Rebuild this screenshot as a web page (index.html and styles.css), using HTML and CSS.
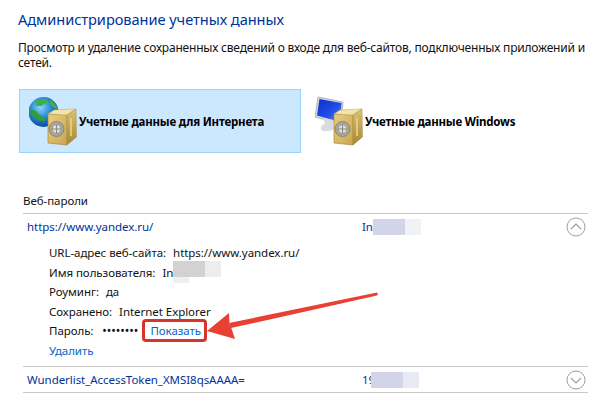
FILE: index.html
```html
<!DOCTYPE html>
<html lang="ru">
<head>
<meta charset="utf-8">
<title>Администрирование учетных данных</title>
<link rel="stylesheet" href="styles.css">
</head>
<body>
<svg width="0" height="0" class="defs">
  <defs>
    <radialGradient id="globe" cx="40%" cy="35%" r="70%">
      <stop offset="0" stop-color="#8ad6f7"/><stop offset=".55" stop-color="#1f7fd0"/><stop offset="1" stop-color="#0f3f95"/>
    </radialGradient>
    <linearGradient id="safeFront" x1="0" y1="0" x2="1" y2="1">
      <stop offset="0" stop-color="#e6cf80"/><stop offset="1" stop-color="#c9a650"/>
    </linearGradient>
    <linearGradient id="safeSide" x1="0" y1="0" x2="0" y2="1">
      <stop offset="0" stop-color="#dcc272"/><stop offset="1" stop-color="#a98636"/>
    </linearGradient>
    <linearGradient id="screen" x1="0" y1="0" x2="1" y2="1">
      <stop offset="0" stop-color="#0a2fc8"/><stop offset=".6" stop-color="#2250e8"/><stop offset="1" stop-color="#7f9cf0"/>
    </linearGradient>
    <g id="safe">
      <path d="M1 5 L20 6 L20 36 L1 34Z" fill="url(#safeFront)" stroke="#a88a3e" stroke-width=".7"/>
      <path d="M1 5 L7 1 L29 0 L20 6Z" fill="#f3e4a8" stroke="#c2a452" stroke-width=".5"/>
      <path d="M20 6 L29 0 L29.500 28 L20 36Z" fill="url(#safeSide)" stroke="#a88a3e" stroke-width=".5"/>
      <path d="M24 9 V27" stroke="#ecd78f" stroke-width="1.500"/>
      <circle cx="9.500" cy="20" r="7.500" fill="#a9a69c" stroke="#7d7a70" stroke-width=".8"/>
      <circle cx="9.500" cy="20" r="4.500" fill="#dedcd4" stroke="#8c8a82" stroke-width=".8"/>
      <path d="M9.500 15.500 V24.500 M5 20 H14" stroke="#8c8a82" stroke-width="1"/>
    </g>
  </defs>
</svg>
<main class="page">
  <h1 class="title">Администрирование учетных данных</h1>
  <p class="lead">Просмотр и удаление сохраненных сведений о входе для веб-сайтов, подключенных приложений и сетей.</p>
  <div class="tabs">
    <div class="tab tab-active">
      <svg class="tab-icon" width="50" height="50" viewBox="0 0 50 50" aria-hidden="true">
        <circle cx="14.500" cy="16" r="15" fill="url(#globe)"/>
        <path d="M7 5 C11 2.500 16 2.500 20 4 C19 7 15 7 13 9.500 C11 11 10 9 7 10Z" fill="#3cae4a"/>
        <path d="M0.500 14 C4 12.500 7 15 9.500 18 C12 20.500 16 20.500 17 24 C14 26.500 10 25 7 23 C4 21 1 18.500 0.500 14Z" fill="#2f9c3f"/>
        <path d="M21 4 C25 6 28 10 29 14 C26 13 23 10 21 8Z" fill="#41b04e"/>
        <use href="#safe" x="18" y="13"/>
      </svg>
      <span class="tab-label">Учетные данные для Интернета</span>
    </div>
    <div class="tab tab-plain">
      <svg class="tab-icon" width="50" height="50" viewBox="0 0 50 50" aria-hidden="true">
        <path d="M3 1 L28 6 L26 28 L0 21Z" fill="#d3d6dc" stroke="#9aa0a8" stroke-width=".7"/>
        <path d="M4.500 3 L26.500 7 L25 26 L2 19.500Z" fill="url(#screen)"/>
        <path d="M8 22 L18 24 L19 30 C23 33 14 36 8 35 C4 33 6 29 10 28Z" fill="#d8dbdf"/>
        <use href="#safe" x="18" y="13"/>
      </svg>
      <span class="tab-label">Учетные данные Windows</span>
    </div>
  </div>
  <h2 class="section">Веб-пароли</h2>
  <section class="list">
    <div class="row">
      <a class="row-name">https://www.yandex.ru/</a>
      <span class="row-user">In<span class="mask mask-blue"></span><span class="mask mask-pale"></span></span>
      <svg class="chev" width="20" height="20" viewBox="0 0 20 20" aria-hidden="true"><circle cx="10" cy="10" r="9" fill="none" stroke="#a0a0a0" stroke-width="1"/><path d="M5 12 L10 7 L15 12" fill="none" stroke="#a0a0a0" stroke-width="1.200"/></svg>
    </div>
    <div class="details">
      <div class="line"><span class="key">URL-адрес веб-сайта:</span><span>https://www.yandex.ru/</span></div>
      <div class="line"><span class="key">Имя пользователя:</span><span class="row-plain">In<span class="mask mask-gray-tall"></span><span class="mask mask-gray"></span><span class="mask mask-lite"></span></span></div>
      <div class="line"><span class="key">Роуминг:</span><span>да</span></div>
      <div class="line"><span class="key">Сохранено:</span><span>Internet Explorer</span></div>
      <div class="line"><span class="key">Пароль:</span><span class="dots">••••••••</span><a class="show">Показать</a></div>
      <div class="line"><a class="link">Удалить</a></div>
    </div>
    <div class="row row-last">
      <a class="row-name">Wunderlist_AccessToken_XMSI8qsAAAA=</a>
      <span class="row-user">19<span class="mask mask-blue mask-tight"></span><span class="mask mask-pale2"></span></span>
      <svg class="chev" width="20" height="20" viewBox="0 0 20 20" aria-hidden="true"><circle cx="10" cy="10" r="9" fill="none" stroke="#a0a0a0" stroke-width="1"/><path d="M5 8 L10 13 L15 8" fill="none" stroke="#a0a0a0" stroke-width="1.200"/></svg>
    </div>
  </section>
  <svg class="arrow" width="190" height="60" viewBox="0 0 190 60" aria-hidden="true">
    <path d="M175 2.500 Q176.500 4 175 5.500 L29 38 L27 33Z" fill="#e84033"/>
    <path d="M5 41 L27 23 L27.500 34 L29 37 L33 49Z" fill="#e84033"/>
  </svg>
</main>
</body>
</html>
```
FILE: styles.css
```css
* { box-sizing: border-box; }
html, body { margin: 0; padding: 0; }
body {
  width: 607px;
  height: 415px;
  overflow: hidden;
  background: #fff;
  font-family: "Noto Sans", "Open Sans", sans-serif;
  color: #111;
  font-size: 11.5px;
  letter-spacing: -.05px;
}
.defs { position: absolute; }
.page { position: relative; padding: 9px 0 0 18px; height: 415px; }
.title {
  margin: 0;
  font-size: 14.600px;
  font-weight: 400;
  line-height: 20px;
  color: #003399;
}
.lead {
  margin: 11px 0 0;
  width: 580px;
  font-size: 12px;
  line-height: 15px;
  letter-spacing: -.2px;
}
.tabs { display: flex; margin: 19px 0 0 1px; }
.tab {
  display: flex;
  align-items: center;
  width: 282px;
  height: 64px;
  padding-left: 9px;
  border: 1px solid transparent;
}
.tab-active { background: #cce8ff; border-color: #99d1ff; }
.tab-plain { padding-left: 13px; }
.tab-icon { flex: none; }
.tab-label { font-weight: 700; font-size: 11.500px; color: #000; letter-spacing: -.2px; }
.section {
  margin: 40px 0 0 5px;
  font-size: 11.500px;
  font-weight: 400;
  line-height: 16px;
}
.list { margin: 4px 0 0 5px; width: 565px; border-top: 1px solid #c8c8c8; }
.row {
  display: flex;
  align-items: center;
  height: 25px;
  padding: 0 2px 0 4px;
}
.row-last {
  height: 27px;
  border-top: 1px solid #c8c8c8;
  border-bottom: 1px solid #c8c8c8;
}
.row-name { width: 335px; color: #003399; white-space: nowrap; }
.row-user { flex: 1; display: flex; align-items: center; color: #003399; }
.row-plain { display: inline-flex; align-items: center; }
.mask { display: inline-block; height: 16px; }
.mask-blue { width: 32px; background: #d2d5e7; }
.mask-tight { margin-left: -4px; }
.mask-pale { width: 16px; background: #f1f2f6; }
.mask-gray-tall { width: 16px; height: 22px; background: linear-gradient(#d2d2d2 73%, #efefef 73%); }
.mask-gray { width: 16px; background: #d2d2d2; margin-bottom: 6px; }
.mask-lite { width: 16px; background: #ededed; margin-bottom: 6px; }
.mask-pale2 { width: 16px; background: #e7e9f4; }
.chev { flex: none; }
.details { padding: 4px 0 6px 26px; }
.line { display: flex; height: 19.500px; align-items: center; white-space: nowrap; }
.key { margin-right: 7px; }
.dots { margin-left: 2px; margin-right: 4px; font-size: 12px; letter-spacing: 0; }
.show, .link { color: #0066cc; }
.show {
  padding: 1px 3px 1px 5px;
  border: 3px solid #d9342b;
  border-radius: 4px;
}
.arrow { position: absolute; left: 202px; top: 290px; }
```
